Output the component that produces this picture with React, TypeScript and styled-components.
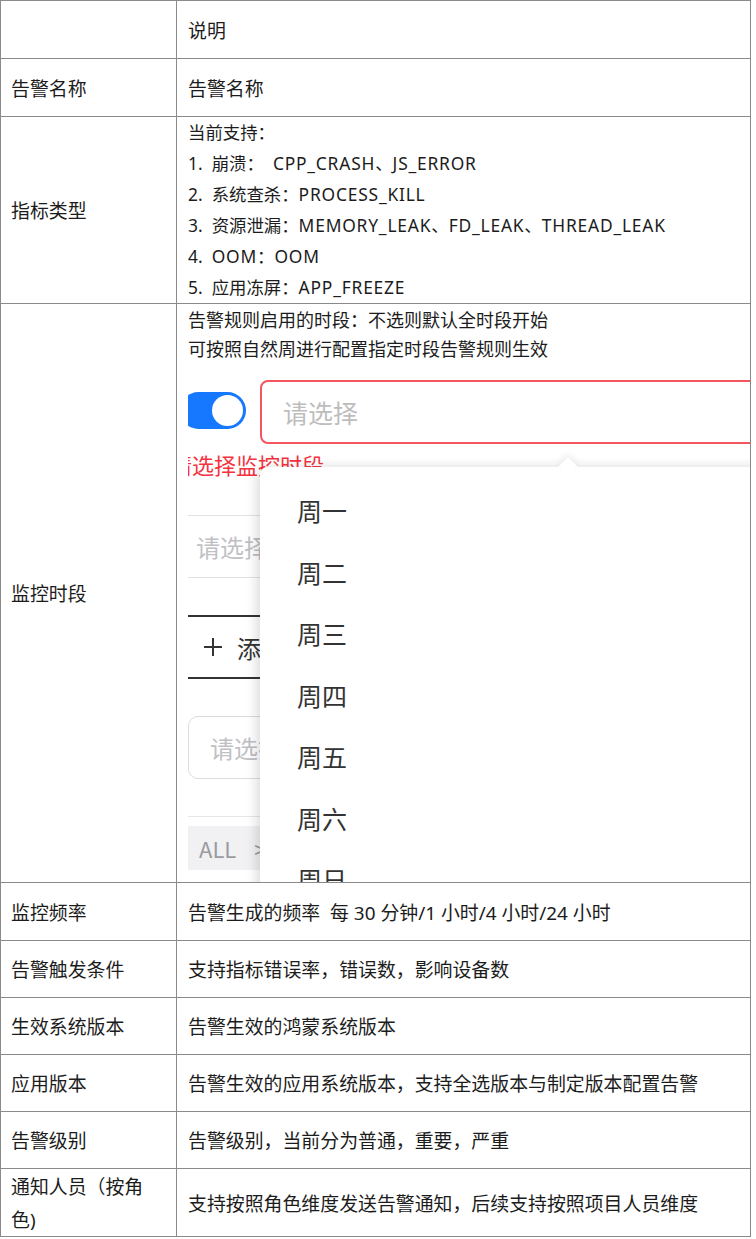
import React from 'react';
import styled, { createGlobalStyle } from 'styled-components';

const Global = createGlobalStyle`
  html, body { margin: 0; padding: 0; background: #fff; }
  body {
    font-family: "Noto Sans", "Noto Sans CJK SC", sans-serif;
    color: #1c1c1c;
  }
`;

const Table = styled.div`
  display: grid;
  grid-template-columns: 175px 573px;
  grid-template-rows: 57px 57px 186px 578px 57px 56px 56px 56px 56px 67px;
  gap: 1px;
  width: max-content;
  background: #8a8a8a;
  border: 1px solid #8a8a8a;
`;

const Cell = styled.div<{ $label?: boolean }>`
  background: #fff;
  display: flex;
  align-items: center;
  padding: 3px ${(p) => (p.$label ? '10px' : '11px')} 0;
  font-size: 18.9px;
  line-height: 33px;
  overflow: hidden;
`;

const ListCell = styled.div`
  background: #fff;
  padding: 0 11px;
  font-size: 17.4px;
  line-height: 31px;
  overflow: hidden;
`;

const Latin = styled.span`
  letter-spacing: 0.8px;
`;

const MonitorCell = styled.div`
  background: #fff;
  position: relative;
  display: flex;
  flex-direction: column;
  padding: 0 0 0 11px;
  overflow: hidden;
`;

const Intro = styled.div`
  padding-top: 2px;
  font-size: 18px;
  line-height: 29px;
`;

const Shot = styled.div`
  position: relative;
  flex: 1;
  margin-top: 16px;
  overflow: hidden;
  font-family: "Noto Sans CJK SC", "Noto Sans", sans-serif;
`;

const ToggleRow = styled.div`
  display: flex;
  align-items: center;
  gap: 14px;
  height: 64px;
`;

const Toggle = styled.div`
  position: relative;
  flex: none;
  width: 66px;
  height: 37px;
  margin: -4px 0 0 -8px;
  border-radius: 19px;
  background: #1677ff;
`;

const Knob = styled.span`
  position: absolute;
  top: 3px;
  right: 3px;
  width: 31px;
  height: 31px;
  border-radius: 50%;
  background: #fff;
`;

const SelectBox = styled.div`
  flex: 1;
  height: 64px;
  box-sizing: border-box;
  margin-right: -40px;
  display: flex;
  align-items: center;
  padding-left: 21px;
  border: 2px solid #f5565e;
  border-radius: 8px;
  font-size: 25px;
  color: #bdbdbd;
`;

const ErrorText = styled.div`
  margin: 5px 0 0 -18px;
  font-size: 22px;
  line-height: 30px;
  color: #f5333f;
  white-space: nowrap;
`;

const FieldRow = styled.div`
  margin-top: 36px;
  height: 63px;
  box-sizing: border-box;
  display: flex;
  align-items: center;
  padding-left: 8px;
  border-top: 1px solid #e3e3e6;
  border-bottom: 1px solid #e3e3e6;
  font-size: 24px;
  color: #c0c0c4;
  white-space: nowrap;
`;

const AddButton = styled.div`
  margin-top: 37px;
  height: 64px;
  box-sizing: border-box;
  display: flex;
  align-items: center;
  gap: 14px;
  padding-left: 15px;
  border-top: 2px solid #333;
  border-bottom: 2px solid #333;
  font-size: 24px;
  color: #333;
  white-space: nowrap;
`;

const RoundInput = styled.div`
  margin-top: 37px;
  height: 63px;
  box-sizing: border-box;
  display: flex;
  align-items: center;
  padding-left: 21px;
  border: 1px solid #dcdce0;
  border-radius: 10px;
  font-size: 24px;
  color: #c0c0c4;
  white-space: nowrap;
`;

const Divider = styled.div`
  margin-top: 37px;
  border-top: 1px solid #e6e6ea;
`;

const AllBar = styled.div`
  margin-top: 9px;
  height: 44px;
  display: flex;
  align-items: center;
  gap: 18px;
  padding-left: 11px;
  background: #f1f1f3;
  font-size: 22px;
  color: #9a9aa0;
  white-space: nowrap;
`;

const DropPanel = styled.div`
  position: absolute;
  left: 72px;
  top: 87px;
  right: -40px;
  bottom: -40px;
  padding-top: 13px;
  background: #fff;
  border-radius: 8px;
  box-shadow: 0 2px 14px rgba(0, 0, 0, 0.13), -6px 0 12px rgba(0, 0, 0, 0.05);
`;

const Arrow = styled.span`
  position: absolute;
  top: -7px;
  left: 301px;
  width: 14px;
  height: 14px;
  background: #fff;
  transform: rotate(45deg);
  box-shadow: -3px -3px 6px rgba(0, 0, 0, 0.06);
`;

const MenuItem = styled.div`
  position: relative;
  height: 61.5px;
  line-height: 61.5px;
  padding-left: 37px;
  font-size: 25px;
  color: #333;
  background: #fff;
`;

const days = ['周一', '周二', '周三', '周四', '周五', '周六', '周日'];

const PlusIcon = () => (
  <svg width="20" height="20" viewBox="0 0 20 20" aria-hidden>
    <path d="M10 1v18M1 10h18" stroke="#333" strokeWidth="2" fill="none" />
  </svg>
);

export default function App() {
  return (
    <>
      <Global />
      <Table>
        <Cell $label />
        <Cell>说明</Cell>

        <Cell $label>告警名称</Cell>
        <Cell>告警名称</Cell>

        <Cell $label>指标类型</Cell>
        <ListCell>
          <div>当前支持：</div>
          <div>
            1.&nbsp; 崩溃：&nbsp; <Latin>CPP_CRASH</Latin>、<Latin>JS_ERROR</Latin>
          </div>
          <div>
            2.&nbsp; 系统查杀：<Latin>PROCESS_KILL</Latin>
          </div>
          <div>
            3.&nbsp; 资源泄漏：<Latin>MEMORY_LEAK</Latin>、<Latin>FD_LEAK</Latin>、<Latin>THREAD_LEAK</Latin>
          </div>
          <div>
            4.&nbsp; <Latin>OOM</Latin>：<Latin>OOM</Latin>
          </div>
          <div>
            5.&nbsp; 应用冻屏：<Latin>APP_FREEZE</Latin>
          </div>
        </ListCell>

        <Cell $label>监控时段</Cell>
        <MonitorCell>
          <Intro>
            <div>告警规则启用的时段：不选则默认全时段开始</div>
            <div>可按照自然周进行配置指定时段告警规则生效</div>
          </Intro>
          <Shot>
            <ToggleRow>
              <Toggle>
                <Knob />
              </Toggle>
              <SelectBox>请选择</SelectBox>
            </ToggleRow>
            <ErrorText>请选择监控时段</ErrorText>
            <FieldRow>请选择</FieldRow>
            <AddButton>
              <PlusIcon />
              <span>添加</span>
            </AddButton>
            <RoundInput>请选择</RoundInput>
            <Divider />
            <AllBar>
              <span>ALL</span>
              <span>&gt;</span>
            </AllBar>
            <DropPanel>
              <Arrow />
              {days.map((d) => (
                <MenuItem key={d}>{d}</MenuItem>
              ))}
            </DropPanel>
          </Shot>
        </MonitorCell>

        <Cell $label>监控频率</Cell>
        <Cell>告警生成的频率&nbsp; 每 30 分钟/1 小时/4 小时/24 小时</Cell>

        <Cell $label>告警触发条件</Cell>
        <Cell>支持指标错误率，错误数，影响设备数</Cell>

        <Cell $label>生效系统版本</Cell>
        <Cell>告警生效的鸿蒙系统版本</Cell>

        <Cell $label>应用版本</Cell>
        <Cell>告警生效的应用系统版本，支持全选版本与制定版本配置告警</Cell>

        <Cell $label>告警级别</Cell>
        <Cell>告警级别，当前分为普通，重要，严重</Cell>

        <Cell $label>
          <span>
            通知人员（按角
            <br />
            色)
          </span>
        </Cell>
        <Cell>支持按照角色维度发送告警通知，后续支持按照项目人员维度</Cell>
      </Table>
    </>
  );
}
